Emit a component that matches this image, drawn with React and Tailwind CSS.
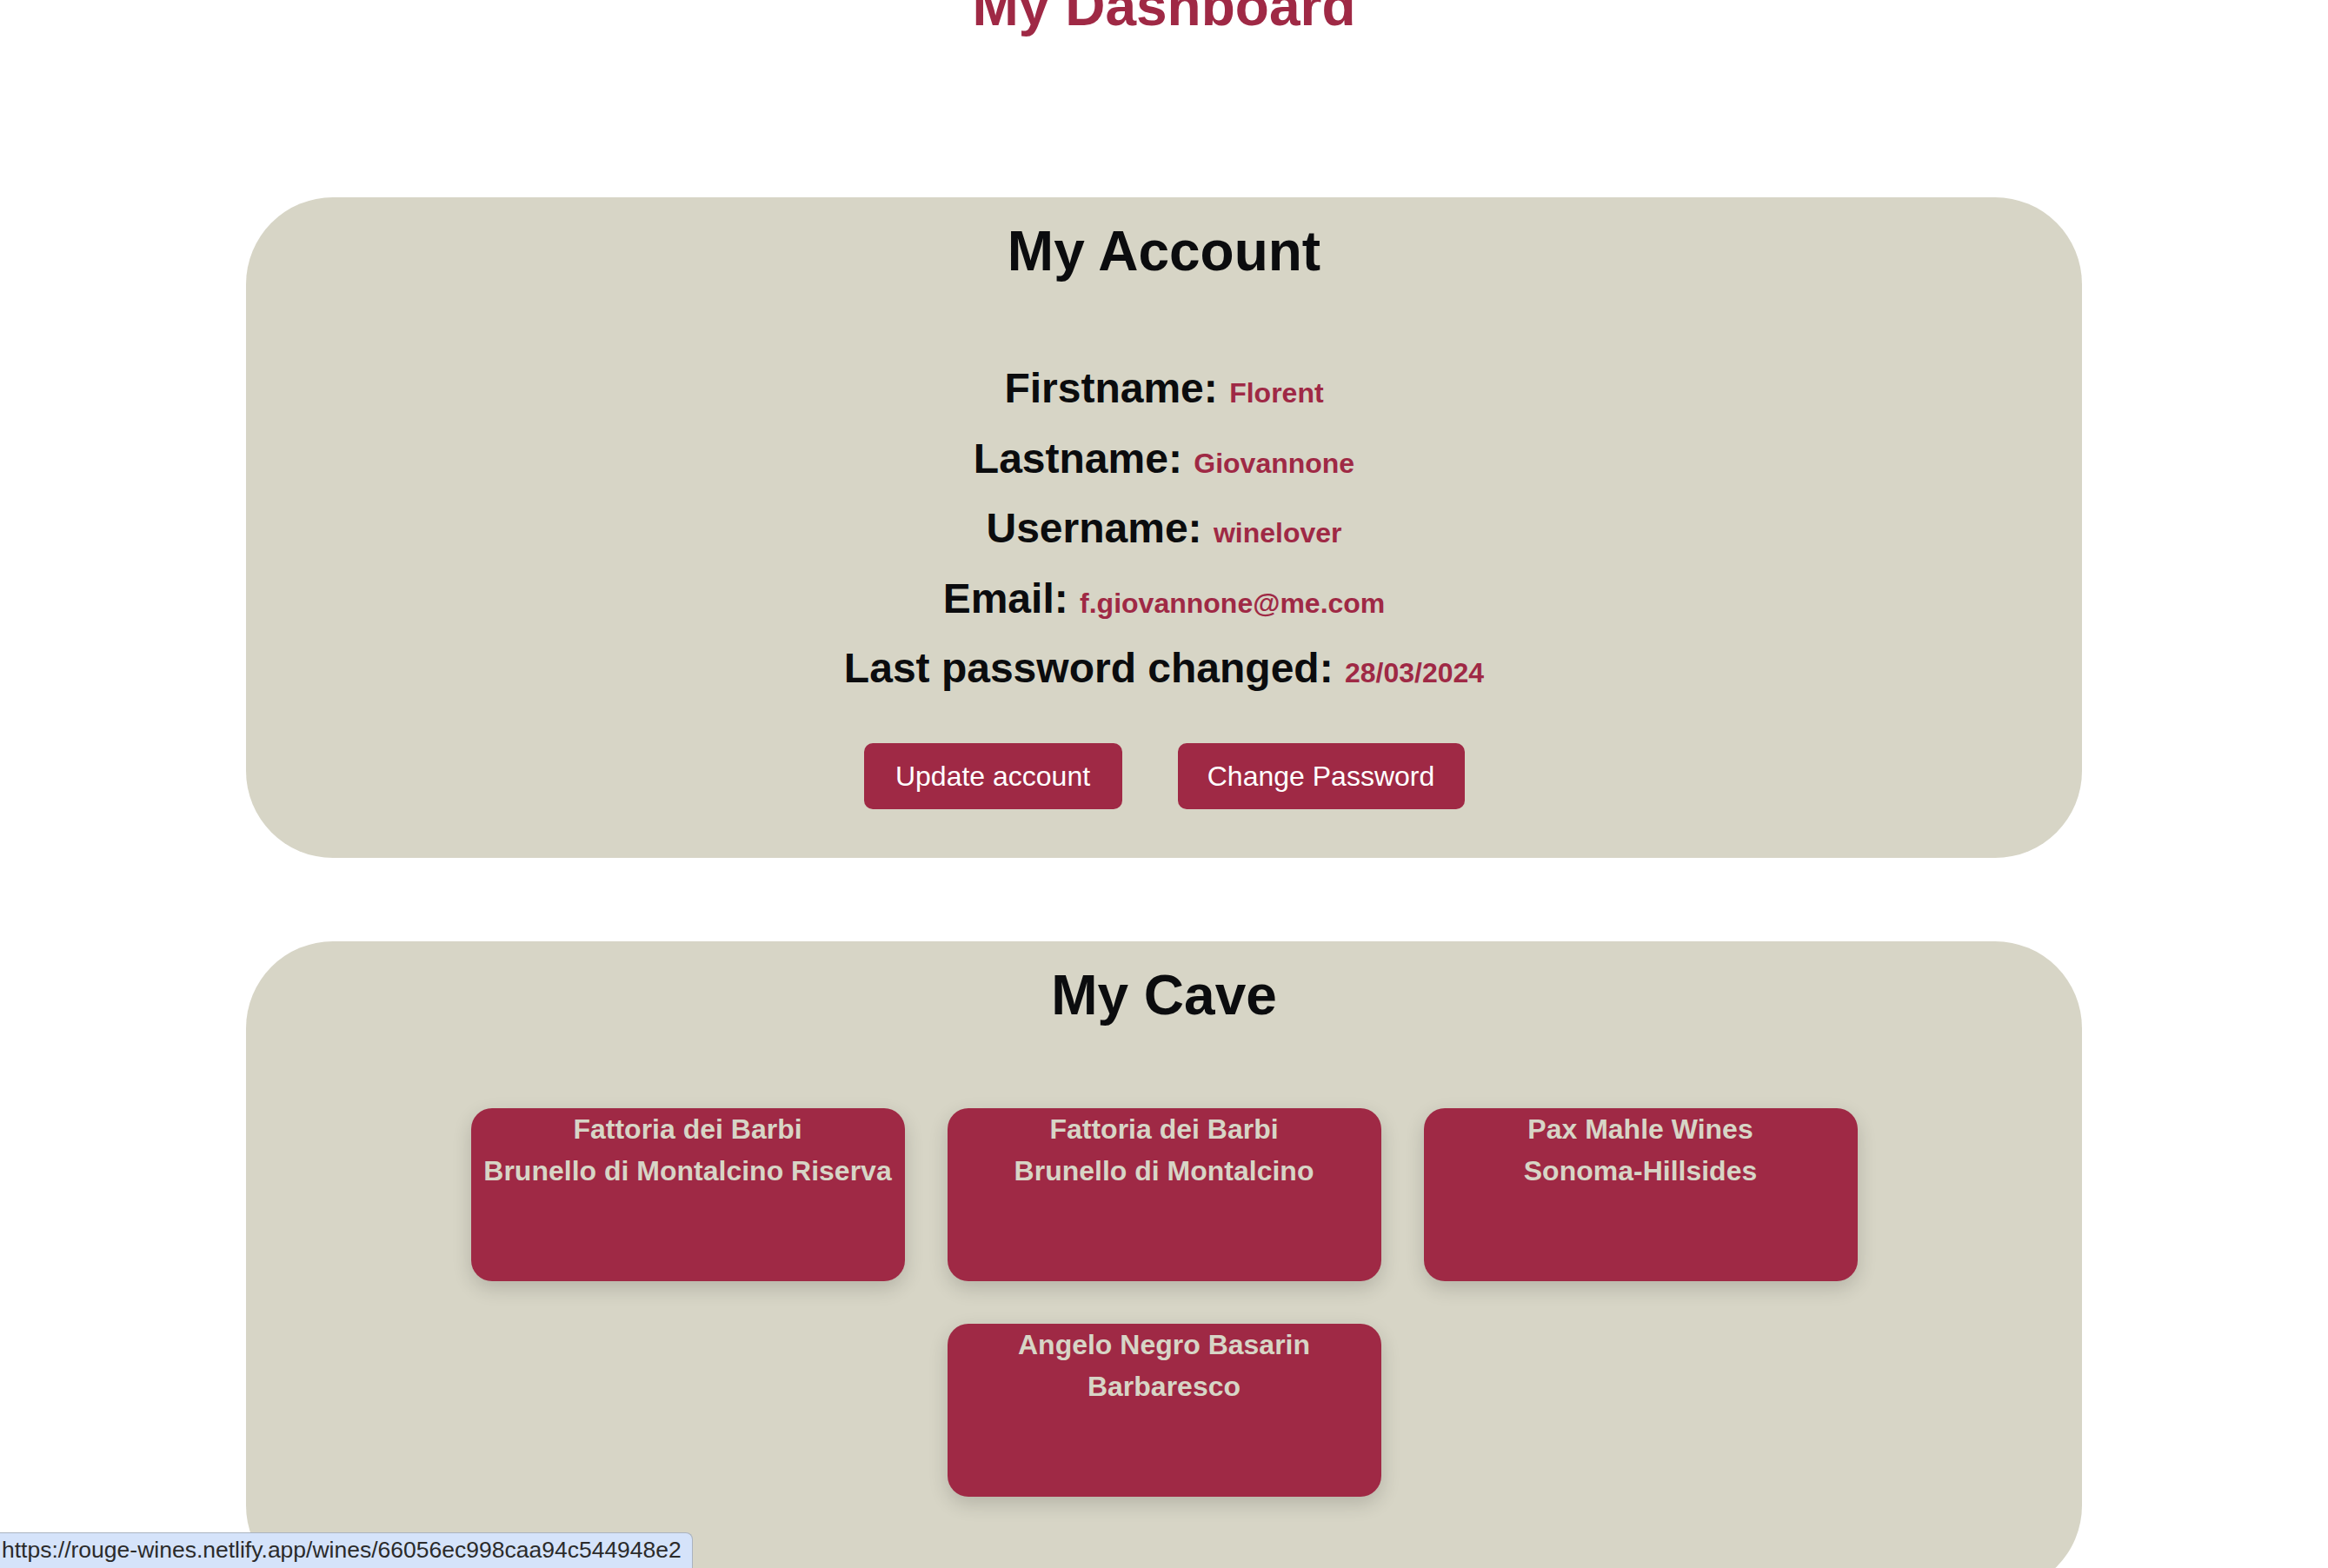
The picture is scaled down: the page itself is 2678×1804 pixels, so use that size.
import React from 'react';

const account = [
  { label: 'Firstname:', value: 'Florent' },
  { label: 'Lastname:', value: 'Giovannone' },
  { label: 'Username:', value: 'winelover' },
  { label: 'Email:', value: 'f.giovannone@me.com' },
  { label: 'Last password changed:', value: '28/03/2024' },
];

const wines = [
  { id: '1', producer: 'Fattoria dei Barbi', name: 'Brunello di Montalcino Riserva' },
  { id: '2', producer: 'Fattoria dei Barbi', name: 'Brunello di Montalcino' },
  { id: '3', producer: 'Pax Mahle Wines', name: 'Sonoma-Hillsides' },
  { id: '66056ec998caa94c544948e2', producer: 'Angelo Negro Basarin', name: 'Barbaresco' },
];

const App = () => {
  return (
    <div className="min-h-screen bg-white font-['Liberation_Sans',Arial,sans-serif] overflow-hidden">
      <main className="flex flex-col items-center pb-[120px]">
        <h1 className="mt-[-25px] text-[64px] leading-none font-bold text-[#9f2945]">My Dashboard</h1>

        {/* Account panel */}
        <section className="mt-[188px] w-[2112px] rounded-[100px] bg-[#d7d5c6] pt-[30px] pb-[56px] flex flex-col items-center">
          <h2 className="text-[64px] leading-none font-bold text-[#0b0c0e]">My Account</h2>

          <div className="mt-[86px] flex flex-col items-center">
            {account.map((row) => (
              <div key={row.label} className="text-[48px] leading-[80.5px] font-bold text-[#0b0c0e]">
                {row.label}{' '}
                <span className="text-[32px] leading-none text-[#9f2945]">{row.value}</span>
              </div>
            ))}
          </div>

          <div className="mt-[45px] flex gap-[64px]">
            <button className="w-[297px] h-[76px] rounded-[10px] bg-[#9f2945] text-white text-[32px] leading-none">
              Update account
            </button>
            <button className="w-[330px] h-[76px] rounded-[10px] bg-[#9f2945] text-white text-[32px] leading-none">
              Change Password
            </button>
          </div>
        </section>

        {/* Cave panel */}
        <section className="mt-[96px] w-[2112px] rounded-[100px] bg-[#d7d5c6] pt-[30px] pb-[110px] flex flex-col items-center">
          <h2 className="text-[64px] leading-none font-bold text-[#0b0c0e]">My Cave</h2>

          <div className="mt-[98px] w-[1600px] flex flex-wrap justify-center gap-[49px]">
            {wines.map((wine) => (
              <a
                key={wine.id}
                href="#"
                className="w-[499px] h-[199px] rounded-[24px] bg-[#9f2945] text-[#d7d5c6] text-[32px] leading-[48px] font-bold text-center shadow-[0_8px_22px_rgba(0,0,0,0.16)]"
              >
                <div>{wine.producer}</div>
                <div>{wine.name}</div>
              </a>
            ))}
          </div>
        </section>
      </main>

      {/* Browser status bar */}
      <div className="fixed bottom-0 left-0 h-[41px] pl-[2px] pr-[12px] flex items-center bg-[#d5e3fa] border-t border-r border-[#aab3c0] rounded-tr-[8px] text-[26.5px] text-[#2b2b2b] font-['Liberation_Sans',Arial,sans-serif]">
        https://rouge-wines.netlify.app/wines/66056ec998caa94c544948e2
      </div>
    </div>
  );
};

export default App;
